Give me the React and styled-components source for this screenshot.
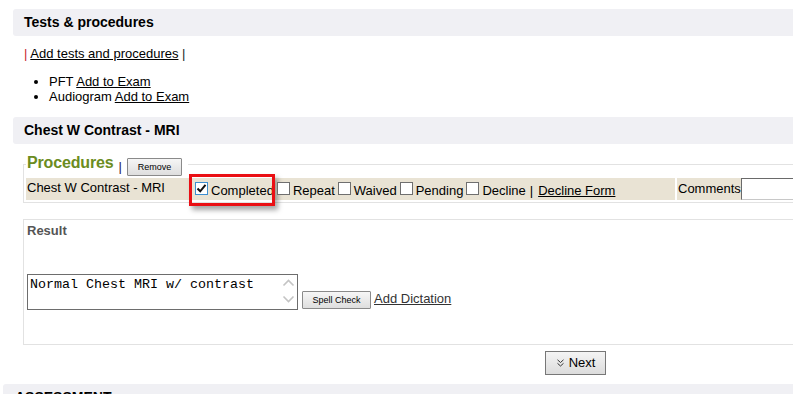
import React from 'react';
import styled, { createGlobalStyle } from 'styled-components';

const Global = createGlobalStyle`
  html, body { margin: 0; padding: 0; overflow: hidden; background: #fff; }
  body {
    font-family: "Liberation Sans", Arial, sans-serif;
    font-size: 13px;
    color: #000;
  }
`;

const Page = styled.div`
  width: 1145px;
  padding: 9px 0 0 3px;
`;

const Section = styled.section`
  margin-left: 10px;
`;

const SectionHeader = styled.h2`
  margin: ${p => p.$top ?? 0}px 0 0;
  height: 27px;
  line-height: 27px;
  padding-left: ${p => p.$indent ?? 11}px;
  background: #f0f0f4;
  border-radius: 3px 0 0 3px;
  font-size: 14px;
  font-weight: bold;
  white-space: nowrap;
  overflow: hidden;
`;

const LinkLine = styled.div`
  margin-top: 10px;
  padding-left: 11px;
  line-height: 15px;
`;

const Pipe = styled.span`
  color: ${p => (p.$red ? '#c8202a' : '#222')};
`;

const Link = styled.a`
  color: ${p => (p.$muted ? '#333' : '#000')};
  text-decoration: underline;
  cursor: pointer;
`;

const List = styled.ul`
  margin: 13px 0;
  padding-left: 36px;
  line-height: 15px;
`;

const SectionBody = styled.div`
  padding-left: 10px;
`;

const Fieldset = styled.fieldset`
  margin: 10px 0 0;
  padding: 2px 0 2px 2px;
  border: 1px solid #e2e2e2;
  border-right: none;
  min-width: 0;
`;

const Legend = styled.legend`
  padding: 0 6px 0 1px;
  line-height: 18px;
  white-space: nowrap;
`;

const LegendTitle = styled.span`
  color: #6b8c21;
  font-size: 16px;
  font-weight: bold;
  letter-spacing: -0.15px;
  vertical-align: 2px;
`;

const LegendPipe = styled.span`
  color: #1a1a4a;
  margin: 0 5px 0 5px;
  vertical-align: middle;
`;

const SmallButton = styled.button`
  box-sizing: border-box;
  width: ${p => p.$w}px;
  height: 18px;
  margin: 0;
  padding: 0;
  font-family: "Liberation Sans", Arial, sans-serif;
  font-size: 9px;
  color: #000;
  background: linear-gradient(#f6f6f6, #dedede);
  border: 1px solid #8a8a8a;
  border-radius: 1px;
  vertical-align: middle;
`;

const ProcRow = styled.div`
  display: flex;
  gap: 2px;
  height: 22px;
`;

const ProcMain = styled.div`
  flex: 0 0 649px;
  display: flex;
  align-items: center;
  background: #e9e3d4;
  white-space: nowrap;
`;

const ProcName = styled.div`
  width: 165px;
  padding: 0 0 3px 1px;
`;

const Option = styled.label`
  position: relative;
  display: flex;
  align-items: center;
  height: 100%;
`;

const OptionText = styled.span`
  padding-top: 3px;
`;

const Box = styled.span`
  box-sizing: border-box;
  width: 13px;
  height: 13px;
  margin: 0 3px 0 3px;
  background: #fff;
  border: 1px solid ${p => (p.$checked ? '#3d8ed0' : '#6f6f6f')};
  display: flex;
  align-items: center;
  justify-content: center;
`;

const Highlight = styled.span`
  position: absolute;
  left: -3px;
  top: -4px;
  width: 86px;
  height: 32px;
  box-sizing: border-box;
  border: 3px solid #ea0f14;
  box-shadow: 3px 4px 5px rgba(0, 0, 0, 0.35);
  pointer-events: none;
`;

const Sep = styled.span`
  padding: 3px 5px 0 4px;
`;

const CommentsCell = styled.div`
  flex: 1;
  display: flex;
  align-items: center;
  background: #e9e3d4;
  padding-left: 1px;
`;

const CommentsLabel = styled.span`
  padding-bottom: 1px;
`;

const CommentsInput = styled.input`
  box-sizing: border-box;
  width: 200px;
  height: 22px;
  margin: 0;
  border: 1px solid #c8c8c8;
  border-top-color: #6a6a6a;
  border-left-color: #6a6a6a;
  background: #fff;
`;

const ResultBox = styled.div`
  margin-top: 16px;
  border: 1px solid #e2e2e2;
  border-right: none;
  padding: 3px 3px 34px;
`;

const ResultLabel = styled.div`
  font-weight: bold;
  color: #555;
  line-height: 15px;
`;

const ResultRow = styled.div`
  margin-top: 36px;
  display: flex;
  align-items: flex-end;
`;

const TextFrame = styled.div`
  box-sizing: border-box;
  width: 271px;
  height: 36px;
  border: 1px solid #6d6d6d;
  display: flex;
  background: #fff;
`;

const TextArea = styled.textarea`
  flex: 1;
  border: none;
  outline: none;
  resize: none;
  overflow: hidden;
  margin: 0;
  padding: 2px 2px;
  font-family: "Liberation Mono", "Courier New", monospace;
  font-size: 13.33px;
  line-height: 15px;
  color: #000;
  background: transparent;
`;

const ScrollCol = styled.div`
  width: 17px;
  display: flex;
  flex-direction: column;
  justify-content: space-between;
  align-items: center;
  padding: 4px 0 6px;
`;

const SpellButton = styled(SmallButton)`
  margin: 0 0 1px 4px;
`;

const DictationLink = styled(Link)`
  margin: 0 0 4px 3px;
  line-height: 15px;
`;

const NextBar = styled.div`
  margin-top: 6px;
  text-align: center;
`;

const NextButton = styled.button`
  box-sizing: border-box;
  width: 61px;
  height: 24px;
  margin: 0;
  padding: 0 0 0 1px;
  font-family: "Liberation Sans", Arial, sans-serif;
  font-size: 13px;
  color: #000;
  background: linear-gradient(#f4f4f4, #dcdcdc);
  border: 1px solid #777;
  display: inline-flex;
  align-items: center;
  justify-content: center;
  gap: 5px;
`;

const Chevron = ({ up }) => (
  <svg width="13" height="8" viewBox="0 0 13 8">
    <path
      d={up ? 'M1.5 6.5 L6.5 1.5 L11.5 6.5' : 'M1.5 1.5 L6.5 6.5 L11.5 1.5'}
      fill="none"
      stroke="#c4c4c4"
      strokeWidth="1.6"
    />
  </svg>
);

const CheckMark = () => (
  <svg width="11" height="11" viewBox="0 0 11 11">
    <path d="M1.5 5.5 L4.2 8.3 L9.5 1.8" fill="none" stroke="#111" strokeWidth="2" />
  </svg>
);

const DoubleDown = () => (
  <svg width="7" height="8" viewBox="0 0 7 8">
    <path d="M0.5 0.8 L3.5 3.5 L6.5 0.8 M0.5 4.3 L3.5 7 L6.5 4.3" fill="none" stroke="#333" strokeWidth="1" />
  </svg>
);

const Check = ({ label, checked, highlight }) => (
  <Option>
    <Box $checked={checked}>{checked && <CheckMark />}</Box>
    <OptionText>{label}</OptionText>
    {highlight && <Highlight />}
  </Option>
);

export default function App() {
  return (
    <>
      <Global />
      <Page>
        <Section>
          <SectionHeader>Tests &amp; procedures</SectionHeader>
          <LinkLine>
            <Pipe $red>|</Pipe> <Link>Add tests and procedures</Link> <Pipe>|</Pipe>
          </LinkLine>
          <List>
            <li>PFT <Link>Add to Exam</Link></li>
            <li>Audiogram <Link>Add to Exam</Link></li>
          </List>

          <SectionHeader>Chest W Contrast - MRI</SectionHeader>
          <SectionBody>
            <Fieldset>
              <Legend>
                <LegendTitle>Procedures</LegendTitle>
                <LegendPipe>|</LegendPipe>
                <SmallButton $w={55}>Remove</SmallButton>
              </Legend>
              <ProcRow>
                <ProcMain>
                  <ProcName>Chest W Contrast - MRI</ProcName>
                  <Check label="Completed" checked highlight />
                  <Check label="Repeat" />
                  <Check label="Waived" />
                  <Check label="Pending" />
                  <Check label="Decline" />
                  <Sep>|</Sep>
                  <OptionText><Link>Decline Form</Link></OptionText>
                </ProcMain>
                <CommentsCell>
                  <CommentsLabel>Comments</CommentsLabel>
                  <CommentsInput />
                </CommentsCell>
              </ProcRow>
            </Fieldset>

            <ResultBox>
              <ResultLabel>Result</ResultLabel>
              <ResultRow>
                <TextFrame>
                  <TextArea defaultValue="Normal Chest MRI w/ contrast" />
                  <ScrollCol>
                    <Chevron up />
                    <Chevron />
                  </ScrollCol>
                </TextFrame>
                <SpellButton $w={69}>Spell Check</SpellButton>
                <DictationLink $muted>Add Dictation</DictationLink>
              </ResultRow>
            </ResultBox>
          </SectionBody>
        </Section>

        <NextBar>
          <NextButton><DoubleDown />Next</NextButton>
        </NextBar>

        <SectionHeader $top={9} $indent={12}>ASSESSMENT</SectionHeader>
      </Page>
    </>
  );
}
